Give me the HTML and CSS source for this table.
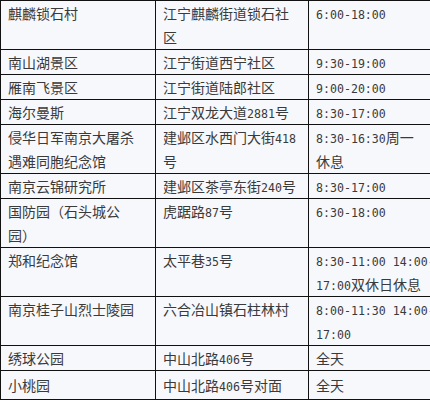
FILE: index.html
```html
<!DOCTYPE html>
<html lang="zh-CN">
<head>
<meta charset="utf-8">
<title>景点开放时间</title>
<link rel="stylesheet" href="styles.css">
</head>
<body>
<table class="sites">
  <tbody>
    <tr>
      <td class="c1">麒麟锁石村</td>
      <td class="c2">江宁麒麟街道锁石社<br>区</td>
      <td class="c3"><span class="n">6:00-18:00</span></td>
    </tr>
    <tr>
      <td class="c1">南山湖景区</td>
      <td class="c2">江宁街道西宁社区</td>
      <td class="c3"><span class="n">9:30-19:00</span></td>
    </tr>
    <tr>
      <td class="c1">雁南飞景区</td>
      <td class="c2">江宁街道陆郎社区</td>
      <td class="c3"><span class="n">9:00-20:00</span></td>
    </tr>
    <tr>
      <td class="c1">海尔曼斯</td>
      <td class="c2">江宁双龙大道<span class="n">2881</span>号</td>
      <td class="c3"><span class="n">8:30-17:00</span></td>
    </tr>
    <tr>
      <td class="c1">侵华日军南京大屠杀<br>遇难同胞纪念馆</td>
      <td class="c2">建邺区水西门大街<span class="n">418</span><br>号</td>
      <td class="c3"><span class="n">8:30-16:30</span>周一<br>休息</td>
    </tr>
    <tr>
      <td class="c1">南京云锦研究所</td>
      <td class="c2">建邺区茶亭东街<span class="n">240</span>号</td>
      <td class="c3"><span class="n">8:30-17:00</span></td>
    </tr>
    <tr>
      <td class="c1">国防园（石头城公<br>园）</td>
      <td class="c2">虎踞路<span class="n">87</span>号</td>
      <td class="c3"><span class="n">6:30-18:00</span></td>
    </tr>
    <tr>
      <td class="c1">郑和纪念馆</td>
      <td class="c2">太平巷<span class="n">35</span>号</td>
      <td class="c3"><span class="n">8:30-11:00 14:00-</span><br><span class="n">17:00</span>双休日休息</td>
    </tr>
    <tr>
      <td class="c1">南京桂子山烈士陵园</td>
      <td class="c2">六合冶山镇石柱林村</td>
      <td class="c3"><span class="n">8:00-11:30 14:00-</span><br><span class="n">17:00</span></td>
    </tr>
    <tr>
      <td class="c1">绣球公园</td>
      <td class="c2">中山北路<span class="n">406</span>号</td>
      <td class="c3">全天</td>
    </tr>
    <tr class="last">
      <td class="c1">小桃园</td>
      <td class="c2">中山北路<span class="n">406</span>号对面</td>
      <td class="c3">全天</td>
    </tr>
  </tbody>
</table>
</body>
</html>
```

FILE: styles.css
```css
html, body {
  margin: 0;
  padding: 0;
  background: #f7f8fc;
  overflow: hidden;
}

.sites {
  border-collapse: separate;
  border-spacing: 0;
  border-top: 1px solid #111;
  border-left: 1px solid #111;
  table-layout: fixed;
  width: 509px;
  font-family: "Noto Sans CJK SC", "Noto Sans", sans-serif;
  font-size: 14px;
  line-height: 24px;
  color: #3a3a3a;
}

.sites td {
  box-sizing: border-box;
  vertical-align: top;
  padding: 0 7px;
  border-right: 1px solid #111;
  border-bottom: 1px solid #111;
  white-space: nowrap;
  overflow: hidden;
}

.sites tr {
  height: 25px;
}

.sites .c1 { width: 155px; }
.sites .c2 { width: 153px; }
.sites .c3 { width: 200px; }

.sites .last td {
  padding-top: 2px;
  padding-bottom: 2px;
}

.n {
  font-family: "DejaVu Sans Mono", "Liberation Mono", monospace;
  font-size: 11.6px;
  line-height: 0;
}
```
